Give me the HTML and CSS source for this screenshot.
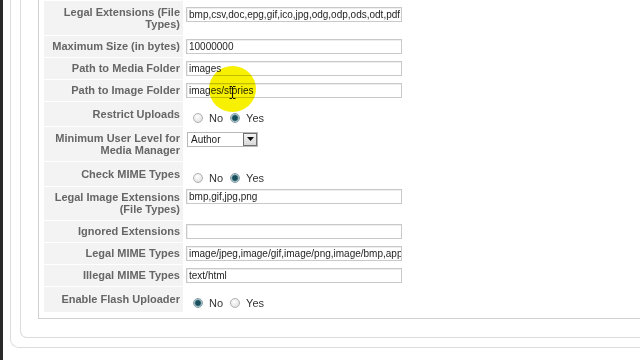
FILE: index.html
```html
<!DOCTYPE html>
<html>
<head>
<meta charset="utf-8">
<link rel="stylesheet" href="styles.css">
</head>
<body>
<div class="page">
  <div class="outer">
    <div class="inner">
      <div class="fieldset">
        <div class="form">
          <div class="key two first">Legal Extensions (File<br>Types)</div>
          <div class="val top first-val"><div class="field">bmp,csv,doc,epg,gif,ico,jpg,odg,odp,ods,odt,pdf,png,ppt,swf,txt,xcf,xls</div></div>

          <div class="key">Maximum Size (in bytes)</div>
          <div class="val"><div class="field">10000000</div></div>

          <div class="key">Path to Media Folder</div>
          <div class="val"><div class="field">images</div></div>

          <div class="key">Path to Image Folder</div>
          <div class="val"><div class="field">images/stories</div></div>

          <div class="key rad">Restrict Uploads</div>
          <div class="val radios">
            <span class="radio"></span><span class="opt">No</span>
            <span class="radio on"></span><span class="opt">Yes</span>
          </div>

          <div class="key two tall">Minimum User Level for<br>Media Manager</div>
          <div class="val top sel-val">
            <div class="select"><span class="sel-text">Author</span><span class="sel-btn"><svg width="7" height="5" viewBox="0 0 7 5"><path d="M0 0h7L3.5 4z" fill="#111"/></svg></span></div>
          </div>

          <div class="key rad">Check MIME Types</div>
          <div class="val radios">
            <span class="radio"></span><span class="opt">No</span>
            <span class="radio on"></span><span class="opt">Yes</span>
          </div>

          <div class="key two short">Legal Image Extensions<br>(File Types)</div>
          <div class="val top short-val"><div class="field">bmp,gif,jpg,png</div></div>

          <div class="key">Ignored Extensions</div>
          <div class="val"><div class="field"></div></div>

          <div class="key">Legal MIME Types</div>
          <div class="val"><div class="field">image/jpeg,image/gif,image/png,image/bmp,application/x-shockwave-flash</div></div>

          <div class="key">Illegal MIME Types</div>
          <div class="val"><div class="field">text/html</div></div>

          <div class="key rad last">Enable Flash Uploader</div>
          <div class="val radios">
            <span class="radio on"></span><span class="opt">No</span>
            <span class="radio"></span><span class="opt">Yes</span>
          </div>
        </div>
      </div>
    </div>
  </div>
  <div class="highlight"></div>
  <svg class="cursor" width="7" height="13" viewBox="0 0 7 13"><path d="M0.5 0.5h2.5M4 0.5h2.5M3.5 1v11M0.5 12.5h2.5M4 12.5h2.5" stroke="#111" stroke-width="1" fill="none"/></svg>
</div>
</body>
</html>
```

FILE: styles.css
```css
html, body {
  margin: 0;
  padding: 0;
  background: #ffffff;
  overflow: hidden;
}

.page {
  position: relative;
  width: 640px;
  height: 360px;
  box-sizing: border-box;
  border-left: 3px solid #2a2a2a;
  overflow: hidden;
}

.outer {
  margin-left: 7px;
  width: 760px;
  border-left: 1px solid #dcdcdc;
  border-bottom: 1px solid #dcdcdc;
  border-bottom-left-radius: 9px;
  padding: 0 0 9px 9px;
}

.inner {
  border-left: 1px solid #dcdcdc;
  border-bottom: 1px solid #dcdcdc;
  border-bottom-left-radius: 7px;
  padding: 0 0 18px 17px;
}

.fieldset {
  border-left: 1px solid #d0d0d0;
  border-bottom: 1px solid #d0d0d0;
  padding: 1px 0 6px 5px;
}

.form {
  display: grid;
  grid-template-columns: 139px 500px;
  column-gap: 2px;
  row-gap: 1px;
}

.key {
  background: #f3f3f3;
  color: #666666;
  font: bold 11px/13px "Liberation Sans", Arial, sans-serif;
  text-align: right;
  padding: 4px 3px 4px 4px;
  white-space: nowrap;
}

.key.two {
  line-height: 12px;
  padding-top: 5px;
  padding-bottom: 5px;
}

.key.two.tall {
  padding-top: 5px;
  padding-bottom: 5px;
}

.key.two.short {
  padding-top: 4px;
  padding-bottom: 5px;
}

.key.rad {
  line-height: 14px;
  padding-top: 5px;
  padding-bottom: 5px;
}

.key.rad.last {
  padding-bottom: 6px;
}

.val {
  display: flex;
  align-items: center;
}

.val.top {
  align-items: flex-start;
}

.first-val { padding-top: 6px; }
.sel-val { padding-top: 5px; }
.short-val { padding-top: 2px; }

.field {
  width: 216px;
  height: 15px;
  box-sizing: border-box;
  margin-left: 1px;
  border: 1px solid #c9c9c9;
  box-shadow: inset 1px 1px 0 #eeeeee;
  background: #ffffff;
  color: #1e1e1e;
  font: 10px/13px "Liberation Sans", Arial, sans-serif;
  padding: 0 2px;
  overflow: hidden;
  white-space: nowrap;
}

.select {
  display: flex;
  align-items: center;
  justify-content: space-between;
  width: 71px;
  height: 15px;
  box-sizing: border-box;
  margin-left: 2px;
  border: 1px solid #b8b8b8;
  background: #ffffff;
}

.sel-text {
  font: 10px/13px "Liberation Sans", Arial, sans-serif;
  color: #1e1e1e;
  padding-left: 3px;
}

.sel-btn {
  display: flex;
  align-items: center;
  justify-content: center;
  width: 14px;
  height: 13px;
  box-sizing: border-box;
  border: 1px solid #707070;
  background: linear-gradient(#f4f4f4, #d8d8d8);
}

.radios {
  padding-top: 7px;
  font: 11px/14px "Liberation Sans", Arial, sans-serif;
  color: #333333;
}

.radio {
  display: inline-block;
  width: 10px;
  height: 10px;
  box-sizing: border-box;
  border-radius: 50%;
  border: 1px solid #b0b0b0;
  background: radial-gradient(circle at 40% 35%, #ffffff, #d9d9d9);
  margin-left: 8px;
  margin-right: 6px;
}

.radio + .opt + .radio {
  margin-left: 7px;
}

.radio.on {
  border-color: #8aa0a8;
  background: radial-gradient(circle, #184f5c 0 2.3px, #5f8a96 3px, #e6eef0 4.2px);
}

.opt {
  display: inline-block;
}

.highlight {
  position: absolute;
  left: 206px;
  top: 66px;
  width: 47px;
  height: 46px;
  border-radius: 50%;
  background: #f7f000;
  mix-blend-mode: multiply;
  filter: blur(0.6px);
}

.cursor {
  position: absolute;
  left: 226px;
  top: 86px;
}
```
